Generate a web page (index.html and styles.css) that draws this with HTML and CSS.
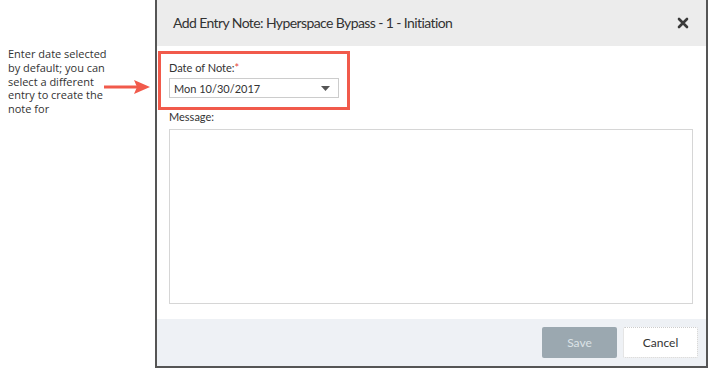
FILE: index.html
```html
<!DOCTYPE html>
<html lang="en">
<head>
  <meta charset="UTF-8">
  <title>Add Entry Note</title>
  <link rel="stylesheet" href="styles.css">
</head>
<body>
  <div class="page">
    <!-- Annotation -->
    <aside class="note">
      <p class="note-text">Enter date selected by default; you can select a different entry to create the note for</p>
      <svg class="note-arrow" width="46" height="14" viewBox="0 0 46 14">
        <line x1="0" y1="7" x2="34" y2="7" stroke="#f15a4b" stroke-width="3"/>
        <polygon points="30,0 46,7 30,14 33,7" fill="#f15a4b"/>
      </svg>
    </aside>

    <!-- Dialog -->
    <section class="dialog">
      <header class="dialog-head">
        <h1>Add Entry Note: Hyperspace Bypass - 1 - Initiation</h1>
        <svg class="close" width="12" height="12" viewBox="0 0 12 12">
          <path d="M2 2 L10 10 M10 2 L2 10" stroke="#3a3a3a" stroke-width="2.6" stroke-linecap="round"/>
        </svg>
      </header>

      <div class="dialog-body">
        <div class="highlight">
          <label class="field-label">Date of Note:<span class="req">*</span></label>
          <div class="select">
            <span>Mon 10/30/2017</span>
            <svg width="9" height="5" viewBox="0 0 9 5"><polygon points="0,0 9,0 4.5,5" fill="#555"/></svg>
          </div>
        </div>
        <label class="field-label msg-label">Message:</label>
        <div class="textarea"></div>
      </div>

      <footer class="dialog-foot">
        <button class="btn btn-save">Save</button>
        <button class="btn btn-cancel">Cancel</button>
      </footer>
    </section>
  </div>
</body>
</html>
```

FILE: styles.css
```css
/* General */
body {
  margin: 0;
  background: #fff;
  font-family: Lato, "Liberation Sans", sans-serif;
  color: #333;
}

.page {
  display: flex;
  height: 368px;
}

/* Annotation column */
.note {
  width: 155px;
  flex: none;
}

.note-text {
  margin: 47px 0 0 8px;
  width: 108px;
  font-family: "Open Sans", sans-serif;
  font-size: 11px;
  line-height: 13.8px;
  color: #333;
}

.note-arrow {
  position: absolute;
  left: 104px;
  top: 80px;
}

/* Dialog */
.dialog {
  width: 549px;
  height: 366px;
  border: 2px solid #555;
  border-top: none;
  display: flex;
  flex-direction: column;
  background: #fff;
}

.dialog-head {
  height: 44px;
  flex: none;
  background: #ececec;
  display: flex;
  align-items: center;
  justify-content: space-between;
  padding: 0 17px 2px 16px;
}

.dialog-head h1 {
  margin: 0;
  font-size: 14px;
  font-weight: normal;
  letter-spacing: -0.6px;
  color: #333;
}

.close {
  margin-top: 2px;
}

.dialog-body {
  flex: 1;
  padding-top: 5px;
}

.highlight {
  margin-left: 1px;
  width: 178px;
  height: 53px;
  border: 3px solid #f15a4b;
  padding: 0 0 0 8px;
}

.field-label {
  display: block;
  font-size: 11px;
  color: #333;
  margin-top: 7px;
}

.req {
  color: #e8453c;
}

.select {
  margin-top: 4px;
  width: 170px;
  height: 20px;
  border: 1px solid #ccc;
  display: flex;
  align-items: center;
  justify-content: space-between;
  padding: 0 8px 0 4px;
  box-sizing: border-box;
  font-size: 11px;
  color: #333;
}

.msg-label {
  margin: 0 0 0 12px;
}

.textarea {
  margin: 6px 0 0 12px;
  width: 522px;
  height: 173px;
  border: 1px solid #d6d6d6;
}

/* Footer */
.dialog-foot {
  height: 47px;
  flex: none;
  background: #eef1f5;
  display: flex;
  justify-content: flex-end;
  align-items: flex-start;
  gap: 6px;
  padding: 8px 8px 0 0;
  box-sizing: border-box;
}

.btn {
  width: 75px;
  height: 31px;
  font-family: Lato, sans-serif;
  font-size: 12px;
  border-radius: 2px;
}

.btn-save {
  background: #9ba8b0;
  border: none;
  color: #dce3e7;
}

.btn-cancel {
  background: #fff;
  border: 1px dotted #ccc;
  color: #333;
}
```
